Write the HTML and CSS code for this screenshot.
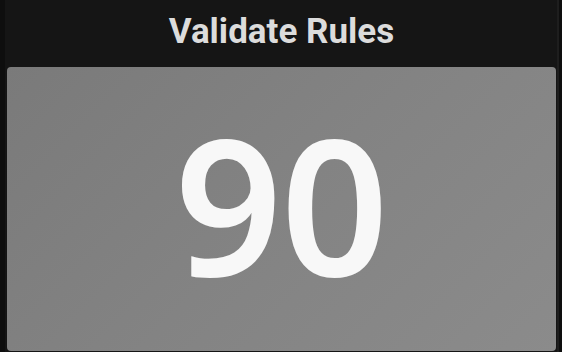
FILE: index.html
```html
<!DOCTYPE html>
<html lang="en">
   <head>
      <meta charset="UTF-8">
      <meta name="viewport" content="width=device-width, initial-scale=1.0">
      <title>Validate Rules</title>
      <link rel="stylesheet" href="styles.css">
   </head>
   <body>
      <div class="panel">
         <h1 class="title">Validate Rules</h1>
         <div class="card">
            <span class="value">90</span>
         </div>
      </div>
   </body>
</html>
```

FILE: styles.css
```css
body,html{
   margin:0;
   padding:0;
   height:100%;
   background:#0e0e0e;
}
*{
   box-sizing:border-box;
}
.panel{
   height:100%;
   margin:0 3px 0 5px;
   padding:0 1px 0 2px;
   background:#151515;
   border-right:2px solid #1e1e1e;
   display:flex;
   flex-direction:column;
}
.title{
   margin:0;
   height:67px;
   line-height:64px;
   text-align:center;
   font-family:Roboto,"Liberation Sans",sans-serif;
   font-weight:700;
   font-size:35px;
   color:#dcdcdc;
}
.card{
   flex:1;
   margin-bottom:1px;
   border-radius:4px;
   background:linear-gradient(135deg,#7a7a7a 0%,#838383 50%,#8b8b8b 100%);
   display:flex;
   align-items:center;
   justify-content:center;
}
.value{
   font-family:"Open Sans","DejaVu Sans",sans-serif;
   font-weight:600;
   font-size:186px;
   line-height:1;
   margin-bottom:12px;
   color:#f8f8f8;
   -webkit-text-stroke:2px #f8f8f8;
}
```
